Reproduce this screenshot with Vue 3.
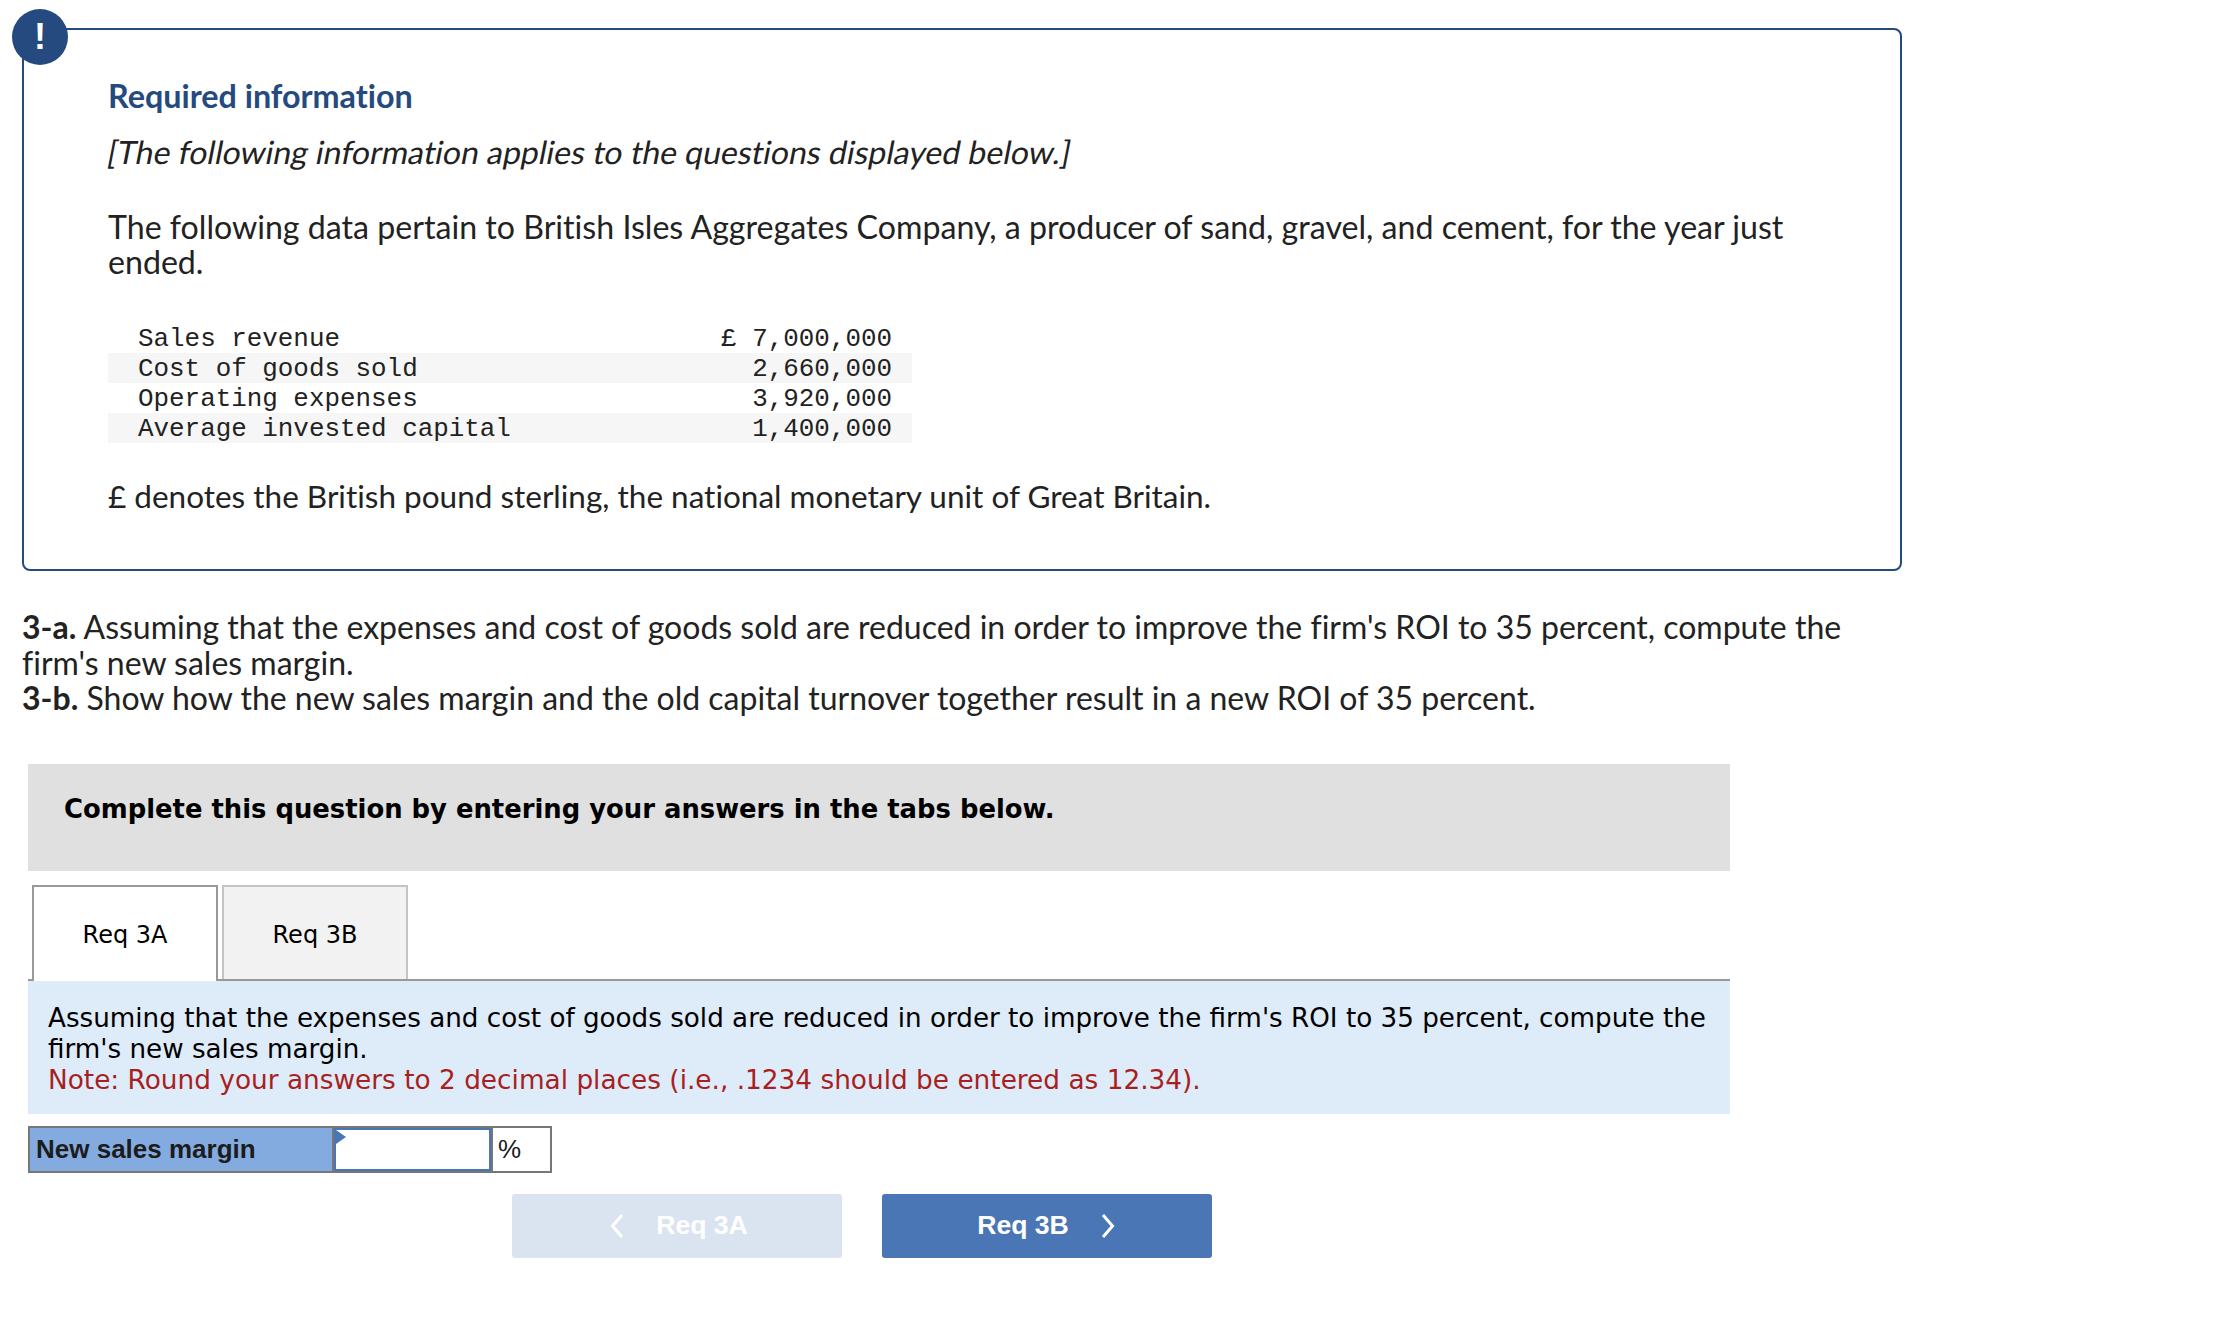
<script setup>
const rows = [
  { label: 'Sales revenue', value: '£ 7,000,000' },
  { label: 'Cost of goods sold', value: '2,660,000' },
  { label: 'Operating expenses', value: '3,920,000' },
  { label: 'Average invested capital', value: '1,400,000' },
]
</script>

<template>
  <div class="page">
    <section class="info">
      <div class="badge">!</div>
      <h2 class="title">Required information</h2>
      <p class="lead"><span>[The following information applies to the questions displayed below.]</span></p>
      <p class="data">The following data pertain to British Isles Aggregates Company, a producer of sand, gravel, and cement, for the year just ended.</p>
      <div class="table">
        <div v-for="r in rows" :key="r.label" class="row">
          <span>{{ r.label }}</span>
          <span>{{ r.value }}</span>
        </div>
      </div>
      <p class="foot">£ denotes the British pound sterling, the national monetary unit of Great Britain.</p>
    </section>

    <p class="question">
      <b>3-a.</b> Assuming that the expenses and cost of goods sold are reduced in order to improve the firm's ROI to 35 percent, compute the firm's new sales margin.<br />
      <b>3-b.</b> Show how the new sales margin and the old capital turnover together result in a new ROI of 35 percent.
    </p>

    <div class="work">
      <div class="banner">Complete this question by entering your answers in the tabs below.</div>
      <div class="tabs">
        <div class="tab active">Req 3A</div>
        <div class="tab">Req 3B</div>
      </div>
      <div class="panel">
        Assuming that the expenses and cost of goods sold are reduced in order to improve the firm's ROI to 35 percent, compute the firm's new sales margin.<br />
        <span class="note">Note: Round your answers to 2 decimal places (i.e., .1234 should be entered as 12.34).</span>
      </div>
      <div class="answer">
        <div class="answer-label">New sales margin</div>
        <div class="answer-input"><i class="flag"></i></div>
        <div class="answer-unit">%</div>
      </div>
      <div class="nav">
        <div class="btn disabled">
          <svg class="chev" width="14" height="26" viewBox="0 0 14 26"><path d="M12 2 2.500 13 12 24" /></svg>
          <span>Req 3A</span>
        </div>
        <div class="btn next">
          <span>Req 3B</span>
          <svg class="chev" width="14" height="26" viewBox="0 0 14 26"><path d="M2 2 11.500 13 2 24" /></svg>
        </div>
      </div>
    </div>
  </div>
</template>

<style>
html, body { margin: 0; background: #fff; }
</style>

<style scoped>
.page {
  width: 2238px;
  height: 1328px;
  box-sizing: border-box;
  padding: 28px 0 0 22px;
  font-family: Lato, "Liberation Sans", sans-serif;
  font-variant-ligatures: none;
  color: #222;
  overflow: hidden;
}
.info {
  position: relative;
  box-sizing: border-box;
  width: 1880px;
  height: 543px;
  border: 2px solid #254a80;
  border-radius: 8px;
  padding: 48px 0 0 84px;
}
.badge {
  position: absolute;
  left: -12px;
  top: -21px;
  width: 56px;
  height: 56px;
  border-radius: 50%;
  background: #254a80;
  color: #fff;
  font: 700 36px/56px "Liberation Sans", sans-serif;
  text-align: center;
}
.title {
  margin: 0;
  font-size: 32.300px;
  line-height: 36px;
  font-weight: 700;
  color: #254a80;
}
.lead {
  margin: 20px 0 0;
  font-size: 32px;
  line-height: 36px;
}
.lead span {
  display: inline-block;
  transform: skewX(-11deg);
}
.data {
  margin: 39px 0 0;
  width: 1720px;
  font-size: 32.150px;
  line-height: 35px;
}
.table {
  margin-top: 44px;
  width: 804px;
  font-family: "Liberation Mono", monospace;
  font-size: 25.900px;
  line-height: 28px;
}
.row {
  display: flex;
  justify-content: space-between;
  padding: 2px 20px 0 30px;
}
.row:nth-child(even) { background: #f6f6f6; }
.foot {
  margin: 35px 0 0;
  font-size: 31.500px;
  line-height: 36px;
}
.question {
  margin: 38px 0 0;
  width: 1860px;
  font-size: 32px;
  line-height: 35.500px;
}
.work {
  margin: 48px 0 0 6px;
  width: 1702px;
}
.banner {
  box-sizing: border-box;
  height: 107px;
  padding: 27px 0 0 36px;
  background: #e0e0e0;
  color: #000;
  font: 700 25.850px/36px "DejaVu Sans", sans-serif;
}
.tabs {
  display: flex;
  gap: 4px;
  margin-top: 14px;
  padding-left: 4px;
  height: 96px;
  border-bottom: 2px solid #999;
  box-sizing: border-box;
}
.tab {
  box-sizing: border-box;
  width: 186px;
  height: 94px;
  border: 2px solid #c4c4c4;
  border-bottom: 0;
  background: #f2f2f2;
  color: #000;
  font: 24px/96px "DejaVu Sans", sans-serif;
  text-align: center;
}
.tab.active {
  height: 96px;
  border-color: #999;
  background: #fff;
  border-bottom: 0;
}
.panel {
  box-sizing: border-box;
  height: 133px;
  padding: 22px 10px 0 20px;
  background: #deebf8;
  color: #000;
  font: 26.200px/31.300px "DejaVu Sans", sans-serif;
}
.note {
  color: #a81f1f;
  font-size: 26.350px;
}
.answer {
  display: flex;
  box-sizing: border-box;
  margin-top: 12px;
  width: 524px;
  height: 47px;
  border: 2px solid #777;
  background: #fff;
}
.answer-label {
  box-sizing: border-box;
  width: 304px;
  padding-left: 6px;
  background: #84abe0;
  color: #1c1c1c;
  font: 700 26px/43px "Liberation Sans", sans-serif;
}
.answer-input {
  position: relative;
  box-sizing: border-box;
  width: 157px;
  border: 2px solid #4a76b5;
  outline: 2px solid #777;
  outline-offset: 0;
}
.flag {
  position: absolute;
  left: 0;
  top: 0;
  width: 0;
  height: 0;
  border-left: 10px solid #4a76b5;
  border-top: 7px solid transparent;
  border-bottom: 7px solid transparent;
}
.answer-unit {
  padding-left: 7px;
  font: 26px/43px "Liberation Sans", sans-serif;
  color: #1c1c1c;
}
.nav {
  display: flex;
  gap: 40px;
  margin: 21px 0 0 484px;
}
.btn {
  display: flex;
  align-items: center;
  justify-content: center;
  gap: 32px;
  box-sizing: border-box;
  width: 330px;
  height: 64px;
  border-radius: 3px;
  background: #4a76b5;
  color: #fff;
  font: 700 26.600px/1 "Liberation Sans", sans-serif;
}
.btn.next { padding-right: 2px; }
.btn.disabled {
  padding-left: 4px;
  background: #dae4f0;
}
.chev path {
  fill: none;
  stroke: #fff;
  stroke-width: 3;
}
</style>
